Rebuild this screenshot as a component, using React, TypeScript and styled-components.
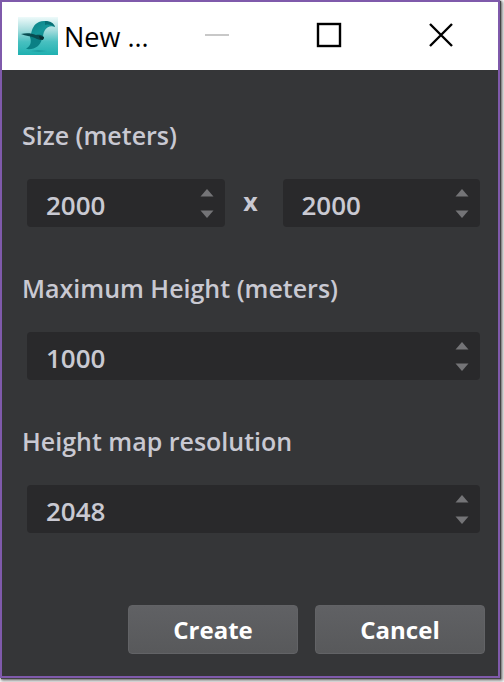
import React, { useId, useState } from "react";
import styled, { createGlobalStyle } from "styled-components";

const GlobalStyle = createGlobalStyle`
  * { box-sizing: border-box; }
  body {
    margin: 0;
    background: #fff;
    font-family: "Open Sans", "Noto Sans", sans-serif;
  }
  button, input { font: inherit; color: inherit; }
`;

const Desktop = styled.div`
  display: flex;
  min-height: 100vh;
  padding: 0 4px 4px 0;
`;

const Dialog = styled.main`
  flex: 1;
  min-width: 0;
  display: flex;
  flex-direction: column;
  border: 2px solid #7f5aab;
  background: #353638;
  box-shadow: 1px 1px 1px #444, 2px 2px 3px 1px #888;
`;

const TitleBar = styled.header`
  display: flex;
  align-items: center;
  height: 68px;
  padding-left: 16px;
  background: #fff;
  color: #000;
`;

const Title = styled.h1`
  flex: 1;
  margin: 0 0 0 6px;
  padding-top: 2px;
  font-size: 27px;
  font-weight: 400;
  line-height: 40px;
  white-space: nowrap;
`;

const WindowControls = styled.div`
  display: flex;
  padding-right: 1px;
`;

const WindowButton = styled.button`
  display: grid;
  place-items: center;
  width: 112px;
  height: 68px;
  padding: 0 0 2px;
  border: 0;
  background: none;
  color: #000;
  &:disabled { color: #c8c8c8; }
`;

const Form = styled.form`
  flex: 1;
  display: flex;
  flex-direction: column;
  justify-content: space-between;
  padding: 47px 13px 22px 20px;
`;

const Fields = styled.div`
  display: flex;
  flex-direction: column;
  gap: 43px;
`;

const Group = styled.div`
  display: flex;
  flex-direction: column;
  gap: 26px;
`;

const Label = styled.label`
  font-size: 25px;
  font-weight: 600;
  line-height: 36px;
  color: #c9c9d2;
  white-space: nowrap;
`;

const FieldRow = styled.div`
  display: flex;
  padding: 0 5px;
`;

const Times = styled.span`
  width: 58px;
  padding-right: 6px;
  text-align: center;
  font-size: 25px;
  font-weight: 700;
  line-height: 44px;
  color: #c9c9d2;
`;

const SpinBox = styled.div`
  flex: 1;
  min-width: 0;
  display: flex;
  height: 48px;
  border-radius: 4px;
  background: #29292b;
  color: #c9c9d2;
`;

const NumberInput = styled.input`
  flex: 1;
  min-width: 0;
  padding: 4px 0 0 19px;
  border: 0;
  outline: 0;
  background: none;
  font-size: 26px;
  font-weight: 600;
`;

const Steps = styled.div`
  display: flex;
  flex-direction: column;
  justify-content: center;
  width: 36px;
`;

const StepButton = styled.button`
  display: grid;
  place-items: center;
  height: 21px;
  padding: 0;
  border: 0;
  background: none;
  color: #747477;
`;

const Actions = styled.div`
  display: flex;
  justify-content: flex-end;
  gap: 17px;
`;

const ActionButton = styled.button`
  width: 170px;
  height: 49px;
  padding: 0;
  border: 1px solid #626366;
  border-radius: 4px;
  background: linear-gradient(#606164, #58595b);
  color: #fff;
  font-size: 24px;
  font-weight: 700;
`;

function BirdLogo() {
  return (
    <svg width="40" height="38" viewBox="0 0 40 38" aria-hidden="true">
      <defs>
        <linearGradient id="sky" x1="0" y1="0" x2="0" y2="1">
          <stop offset="0" stopColor="#eefafa" />
          <stop offset="0.35" stopColor="#a4dcdd" />
          <stop offset="0.65" stopColor="#48c0c0" />
          <stop offset="1" stopColor="#1fb0b0" />
        </linearGradient>
        <linearGradient id="wing" x1="0" y1="0" x2="1" y2="1">
          <stop offset="0" stopColor="#0b7f84" />
          <stop offset="0.5" stopColor="#15979a" />
          <stop offset="1" stopColor="#0b7c80" />
        </linearGradient>
      </defs>
      <rect width="40" height="38" fill="url(#sky)" />
      <path d="M13 17C14 12 16 7 21 5C26 3 34 4 37 10C33 8 29 10 27 13C25 16 25 19 25 21L18 20Z" fill="url(#wing)" />
      <path d="M12 18L24 22C22 29 17 33 8 32C12 29 14 26 12 20Z" fill="#0a8085" />
      <path d="M3 17C8 16 13 16 18 18C22 17 26 19 26 21C25 24 20 23 17 21C12 19 8 19 3 17Z" fill="#084c51" />
      <path d="M21 19L26 20L25 23L22 22Z" fill="#092c31" />
      <path d="M27 4C32 4 36 6 37 10C34 8 31 7 27 8Z" fill="#087075" />
      <path d="M12 34L20 33L29 34L21 35Z" fill="#168f94" opacity="0.6" />
    </svg>
  );
}

function Arrow({ down = false }: { down?: boolean }) {
  return (
    <svg width="14" height="8" viewBox="0 0 14 8" aria-hidden="true">
      <path d={down ? "M0.5 0.5H13.5L7 8Z" : "M0.5 7.5H13.5L7 0Z"} fill="currentColor" />
    </svg>
  );
}

interface SpinProps {
  id?: string;
  name: string;
  initial: number;
  label?: string;
}

function NumberSpin({ id, name, initial, label }: SpinProps) {
  const [value, setValue] = useState(String(initial));
  const step = (delta: number) => setValue((v) => String(Math.max(0, (Number(v) || 0) + delta)));
  return (
    <SpinBox>
      <NumberInput
        id={id}
        name={name}
        aria-label={label}
        inputMode="numeric"
        value={value}
        onChange={(e) => setValue(e.target.value)}
      />
      <Steps>
        <StepButton type="button" aria-label="Increase" onClick={() => step(1)}><Arrow /></StepButton>
        <StepButton type="button" aria-label="Decrease" onClick={() => step(-1)}><Arrow down /></StepButton>
      </Steps>
    </SpinBox>
  );
}

export default function App() {
  const id = useId();
  return (
    <>
      <GlobalStyle />
      <Desktop>
        <Dialog>
          <TitleBar>
            <BirdLogo />
            <Title>New ...</Title>
            <WindowControls>
              <WindowButton type="button" aria-label="Minimize" disabled>
                <svg width="26" height="26"><path d="M1 13H25" stroke="currentColor" strokeWidth="2" /></svg>
              </WindowButton>
              <WindowButton type="button" aria-label="Maximize">
                <svg width="26" height="26"><rect x="2" y="2" width="22" height="22" fill="none" stroke="currentColor" strokeWidth="2.4" /></svg>
              </WindowButton>
              <WindowButton type="button" aria-label="Close">
                <svg width="26" height="26"><path d="M2 2L24 24M24 2L2 24" stroke="currentColor" strokeWidth="2.4" /></svg>
              </WindowButton>
            </WindowControls>
          </TitleBar>
          <Form onSubmit={(e) => e.preventDefault()}>
            <Fields>
              <Group>
                <Label htmlFor={id + "width"}>Size (meters)</Label>
                <FieldRow>
                  <NumberSpin id={id + "width"} name="width" initial={2000} />
                  <Times>x</Times>
                  <NumberSpin name="length" label="Length (meters)" initial={2000} />
                </FieldRow>
              </Group>
              <Group>
                <Label htmlFor={id + "height"}>Maximum Height (meters)</Label>
                <FieldRow>
                  <NumberSpin id={id + "height"} name="height" initial={1000} />
                </FieldRow>
              </Group>
              <Group>
                <Label htmlFor={id + "resolution"}>Height map resolution</Label>
                <FieldRow>
                  <NumberSpin id={id + "resolution"} name="resolution" initial={2048} />
                </FieldRow>
              </Group>
            </Fields>
            <Actions>
              <ActionButton type="submit">Create</ActionButton>
              <ActionButton type="button">Cancel</ActionButton>
            </Actions>
          </Form>
        </Dialog>
      </Desktop>
    </>
  );
}
